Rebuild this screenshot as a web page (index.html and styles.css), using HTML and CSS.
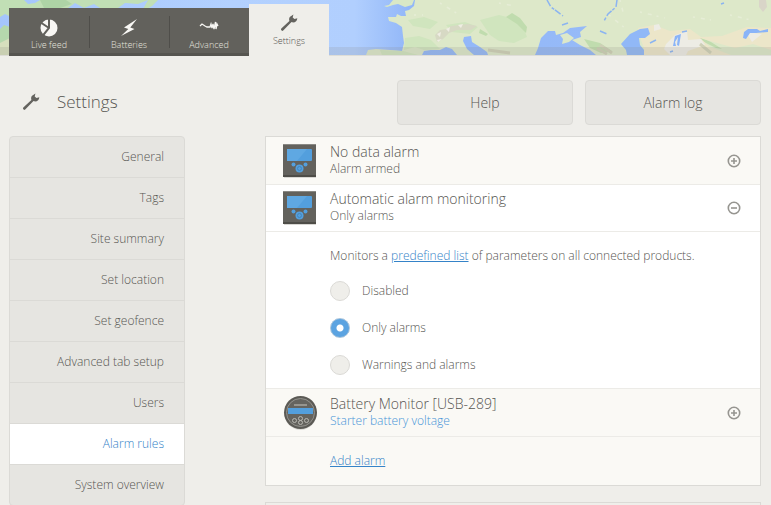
FILE: index.html
```html
<!DOCTYPE html>
<html lang="en">
<head>
<meta charset="utf-8">
<title>Settings - Alarm rules</title>
<link rel="stylesheet" href="styles.css">
</head>
<body>
<svg class="defs" aria-hidden="true">
  <symbol id="wrench" viewBox="0 0 18 18">
    <path d="M11.2 2.1 13.4.6 12.7 3.5 14.5 5.1 17.3 4.2C17.3 7.6 14.3 9.1 11.5 8.1L3.2 16.6C2 17.6.2 15.9 1.3 14.6L9.4 7C8.6 4.5 9.5 2.9 11.2 2.1Z"/>
  </symbol>
  <symbol id="panel-device" viewBox="0 0 34 36">
    <rect x="1" y="3" width="32" height="32" fill="#d8d7d3"/>
    <rect y="1" width="33" height="33" fill="#63625d"/>
    <rect y="1" width="33" height="1" fill="#8a8984"/>
    <rect y="32" width="33" height="2" fill="#4e4d48"/>
    <rect x="4" y="6" width="25" height="12" rx="1" fill="#539fdd"/>
    <path d="M4 6H24L14 18H4Z" fill="#5fa8e2"/>
    <circle cx="16.500" cy="25.500" r="4" fill="#539fdd"/>
    <circle cx="16.500" cy="25.500" r="2" fill="none" stroke="#4386bd"/>
    <circle cx="10.500" cy="21.500" r="2" fill="#539fdd"/>
    <circle cx="22.500" cy="21.500" r="2" fill="#539fdd"/>
  </symbol>
</svg>

<header class="header">
  <svg class="map" viewBox="0 0 771 55" preserveAspectRatio="xMinYMin slice" aria-hidden="true">
    <defs>
      <linearGradient id="sea" x1="0" x2="1">
        <stop offset="0" stop-color="#a4c5fc"/><stop offset=".3" stop-color="#b3d1ff"/>
        <stop offset=".46" stop-color="#b1cffe"/><stop offset=".53" stop-color="#92b7f8"/>
        <stop offset="1" stop-color="#9abdf8"/>
      </linearGradient>
    </defs>
    <rect width="771" height="55" fill="url(#sea)"/>
    <path d="M0 0H24L28 4 35 3 40 0H158L152 6 147 9H143L148 0 138 4 125 3 118 8H100L94 4 84 8 75 3 68 8H24L14 10 9 16 5 14 0 17Z" fill="#c1dfb5"/>
    <path d="M0 29 4 25 10 27V55H0Z" fill="#b5d8ad"/>
    <path d="M0 43 10 38V55H0Z" fill="#d7dfbd"/>
    <path d="M40 0H66L72 4 60 8H44Z" fill="#aed4a6"/>
    <path d="M384 6 389 5 393 0H414L412 5 405 7 398 4 393 5 387 7Z" fill="#d9e8c6"/>
    <path d="M415 0 414 6 409 10 405 11 406 16 401 16 397 14 396 17 388 17 389 21 396 23 402 27 403 36 404 43 402 51 390 50 376 49 368 50 366 55H422L424 51 431 50 440 50 446 47 452 49 457 55H474L467 49 463 41 464 37 471 36 472 42 480 47 487 52 488 55H535L538 48 541 38 548 31 555 31 556 35 563 33 570 28 587 26 580 32 581 37 572 40 580 45 590 50 596 55H771V0Z" fill="#dde8c9"/>
    <path d="M560 35 567 33 574 38 569 42 562 44 563 39Z" fill="#dde8c9"/>
    <path d="M405 38 419 36 431 40 440 49 424 50 415 47 404 50ZM408 20 424 17 438 22 430 29 413 26ZM446 25 465 22 478 27 470 34 452 32ZM480 20 499 15 511 18 523 27 527 37 514 43 499 41 490 35ZM380 50 403 51 418 55H382Z" fill="#d0e5be"/>
    <path d="M512 13 520 18 527 27 526 33 517 24 506 17ZM480 29 488 34 486 36 479 33ZM584 39 600 43 612 51 601 53 590 48ZM697 36 711 42 722 49 716 48 702 41Z" fill="#c0dcae"/>
    <path d="M435 35 440 30 447 29 451 26 460 25 468 24 477 26 471 30 457 30 449 33 443 39 437 42Z" fill="#d7d9c4"/>
    <path d="M437 34 441 32 440 37ZM446 29 450 27 449 32ZM458 25 463 24 461 28ZM437 40 442 39 438 42Z" fill="#efede3"/>
    <path d="M638 28 654 25 670 31 690 29 701 37 722 36 747 27 771 28V50L753 44 735 48 717 43 700 38 710 47 731 55H644V48L641 40Z" fill="#ece6c9"/>
    <path d="M666 44 675 35 687 31 688 40 701 39 705 45 688 51 686 55H670L664 49ZM654 25 659 24 661 29 654 31ZM746 32 762 34 752 42Z" fill="#edece5"/>
    <path d="M759 0H766L767 7 763 12 759 7Z" fill="#d9d5c8"/>
    <path d="M621 44 630 34 640 29 648 28 650 34 645 38 639 38 640 45 644 50 644 55H627L626 50Z" fill="#91b8f7"/>
    <path d="M673 46 675 36 681 34 679 46 677 45 678 37 675 42 676 46ZM743 38 744 32 748 29 757 29 760 31 768 29 768 32 756 33 750 33 746 39Z" fill="#8ab4f8"/>
    <path d="M547 0 551 7 563 16M617 0 616 7 608 14 604 21M562 25 568 23M600 31 607 34M650 43 656 40M682 32 687 31M721 4 724 3M670 52 673 51" fill="none" stroke="#8bb4f1" stroke-width="1.500" stroke-dasharray="7 2 3 1"/>
    <path d="M609 15 625 28M620 0 623 12M414 15H423M440 3 458 14M499 3 514 6M640 12 665 18M693 17 711 20M730 15 751 20" fill="none" stroke="#e6edd6" stroke-width="1.500" stroke-dasharray="2 6 4 5"/>
    <path d="M600 45 612 53M597 48 607 54M488 50 510 53M700 44 711 53" stroke="#ced0b6" stroke-width="3"/>
    <rect y="47" width="771" height="8" fill="#87857a" opacity=".17"/>
  </svg>
  <nav class="tabs">
    <a class="tab" href="#feed"><svg class="tab-icon" viewBox="0 0 20 20"><circle cx="10" cy="10" r="8.500" fill="#f8f7f4"/><path d="M10-1V10L3.500 18M10 10 1 4" fill="none" stroke="#62615c" stroke-width="2"/></svg>Live feed</a>
    <a class="tab" href="#batteries"><svg class="tab-icon" viewBox="0 0 20 20"><path d="M18 1 5 9.500 9.300 11 2 18 15.500 11 11.300 9.500Z" fill="#f8f7f4"/></svg>Batteries</a>
    <a class="tab" href="#advanced"><svg class="tab-icon" viewBox="0 0 20 20"><path d="M1 8 3 6 6 8 8 9H11L12 6 13 10 14 6 15 11 16.500 4 17 11 18 6 19 8" fill="none" stroke="#f8f7f4" stroke-width="1.300"/></svg>Advanced</a>
    <a class="tab tab-active" href="#settings"><svg class="tab-icon wrench"><use href="#wrench"/></svg>Settings</a>
  </nav>
</header>

<main class="page">
  <div class="toolbar">
    <h1 class="title"><svg class="title-icon wrench"><use href="#wrench"/></svg>Settings</h1>
    <button class="button" type="button">Help</button>
    <button class="button" type="button">Alarm log</button>
  </div>
  <div class="columns">
    <nav class="side">
      <a href="#general">General</a>
      <a href="#tags">Tags</a>
      <a href="#summary">Site summary</a>
      <a href="#location">Set location</a>
      <a href="#geofence">Set geofence</a>
      <a href="#tab-setup">Advanced tab setup</a>
      <a href="#users">Users</a>
      <a class="current" href="#alarms">Alarm rules</a>
      <a href="#overview">System overview</a>
    </nav>
    <div class="content">
      <section class="card">
        <div class="row">
          <svg class="device"><use href="#panel-device"/></svg>
          <div class="row-text"><h2>No data alarm</h2><p>Alarm armed</p></div>
          <button class="toggle" type="button" aria-label="Expand"><svg viewBox="0 0 14 14"><circle cx="7" cy="7" r="5.700"/><path d="M4 7H10M7 4V10"/></svg></button>
        </div>
        <div class="row row-open">
          <svg class="device"><use href="#panel-device"/></svg>
          <div class="row-text"><h2>Automatic alarm monitoring</h2><p>Only alarms</p></div>
          <button class="toggle" type="button" aria-label="Collapse"><svg viewBox="0 0 14 14"><circle cx="7" cy="7" r="5.700"/><path d="M4 7H10"/></svg></button>
        </div>
        <div class="details">
          <p>Monitors a <a href="#list">predefined list</a> of parameters on all connected products.</p>
          <div class="options">
            <label><input type="radio" name="mode">Disabled</label>
            <label><input type="radio" name="mode" checked>Only alarms</label>
            <label><input type="radio" name="mode">Warnings and alarms</label>
          </div>
        </div>
        <div class="row">
          <svg class="device" viewBox="0 0 34 36">
            <circle cx="17.500" cy="19" r="16" fill="#dddcd8"/>
            <circle cx="17.500" cy="17.500" r="16.500" fill="#5b5a55"/>
            <circle cx="17.500" cy="17.500" r="14" fill="#65645f" stroke="#94938e"/>
            <rect x="11" y="9" width="13" height="2" fill="#96958f"/>
            <rect x="5" y="13" width="25" height="6" fill="#539fdd"/>
            <g fill="none" stroke="#b9b8b2"><circle cx="11.500" cy="25.500" r="2"/><circle cx="23.500" cy="25.500" r="2"/><circle cx="17.500" cy="23.500" r="2"/><circle cx="17.500" cy="27.500" r="2"/></g>
          </svg>
          <div class="row-text"><h2>Battery Monitor [USB-289]</h2><p class="blue">Starter battery voltage</p></div>
          <button class="toggle" type="button" aria-label="Expand"><svg viewBox="0 0 14 14"><circle cx="7" cy="7" r="5.700"/><path d="M4 7H10M7 4V10"/></svg></button>
        </div>
        <div class="card-footer"><a href="#add">Add alarm</a></div>
      </section>
      <section class="card card-next"></section>
    </div>
  </div>
</main>
</body>
</html>
```
FILE: styles.css
```css
* { box-sizing: border-box; }
body {
  margin: 0;
  background: #efeeea;
  color: #565551;
  font: 300 12px/18px "Open Sans", "Noto Sans", sans-serif;
}
h1, h2, p { margin: 0; font-weight: 300; }
a { color: #3583c8; }
button { font: inherit; color: inherit; cursor: pointer; }
.defs { position: absolute; width: 0; height: 0; }
.wrench { fill: #64635f; }

.header {
  position: relative;
  height: 56px;
  padding: 4px 9px 0;
  border-bottom: 1px solid #deddd7;
}
.map { position: absolute; left: 0; top: 0; width: 100%; height: 100%; }
.tabs { position: relative; display: flex; align-items: flex-end; height: 52px; }
.tab {
  display: flex;
  flex-direction: column;
  align-items: center;
  width: 80px;
  height: 48px;
  padding-top: 10px;
  border-bottom: 3px solid #565550;
  background: #62615c;
  color: #e5e4df;
  font-size: 9px;
  line-height: 14px;
  text-decoration: none;
}
.tab:nth-child(2), .tab:nth-child(3) {
  background: linear-gradient(#4f4e4a, #4f4e4a) left 8px / 1px 32px no-repeat #62615c;
}
.tab-icon { width: 20px; height: 20px; }
.tab-icon.wrench { width: 18px; height: 18px; margin-bottom: 2px; }
.tab-active {
  height: 52px;
  border: 0;
  background: #efeeea;
  color: #55544f;
}

.page { padding: 24px 10px 0 9px; }
.toolbar { display: flex; gap: 12px; }
.title {
  display: flex;
  flex: 1;
  align-items: center;
  gap: 17px;
  height: 43px;
  padding-left: 13px;
  font-size: 17px;
  line-height: 24px;
}
.title-icon { width: 18px; height: 18px; }
.button {
  width: 176px;
  height: 45px;
  border: 1px solid #dbdad6;
  border-radius: 4px;
  background: #e6e5e1;
  font-size: 14px;
}
.columns { display: flex; align-items: flex-start; gap: 80px; margin-top: 11px; }
.side {
  width: 176px;
  border: 1px solid #dbdad6;
  border-radius: 4px;
  background: #e6e5e1;
}
.side a {
  display: block;
  padding: 11px 20px;
  border-bottom: 1px solid #dbdad6;
  color: inherit;
  text-align: right;
  text-decoration: none;
}
.side a:last-child { border-bottom: 0; }
.side .current { background: #fff; color: #3583c8; }

.content { flex: 1; }
.card { border: 1px solid #dbdad6; background: #faf9f5; }
.row {
  display: flex;
  align-items: center;
  height: 48px;
  padding: 0 19px 0 17px;
  border-bottom: 1px solid #ecebe7;
}
.row-open { height: 47px; background: #fff; }
.device { width: 34px; height: 36px; margin-right: 13px; }
.row-text { flex: 1; padding-bottom: 2px; }
h2 { font-size: 14px; line-height: 18px; }
.row-text p { line-height: 16px; }
.row-text .blue { color: #4795d8; }
.toggle { width: 14px; height: 14px; padding: 0; border: 0; background: none; }
.toggle svg { display: block; fill: none; stroke: #969590; stroke-width: 1.6px; }
.details {
  padding: 15px 64px 5px;
  border-bottom: 1px solid #ecebe7;
  background: #fff;
}
.options { margin-top: 7px; }
.options label { display: flex; align-items: center; gap: 12px; height: 37px; }
.options input {
  appearance: none;
  width: 20px;
  height: 20px;
  margin: 0;
  border: 1px solid #dbdad6;
  border-radius: 50%;
  background: #efeeea;
}
.options input:checked {
  border-color: #a9c4db;
  background: radial-gradient(circle, #fff 3px, #5ba3e1 4px);
}
.card-footer { padding: 15px 64px; }
.card-next { height: 48px; margin-top: 16px; background: #efeeea; }
```
